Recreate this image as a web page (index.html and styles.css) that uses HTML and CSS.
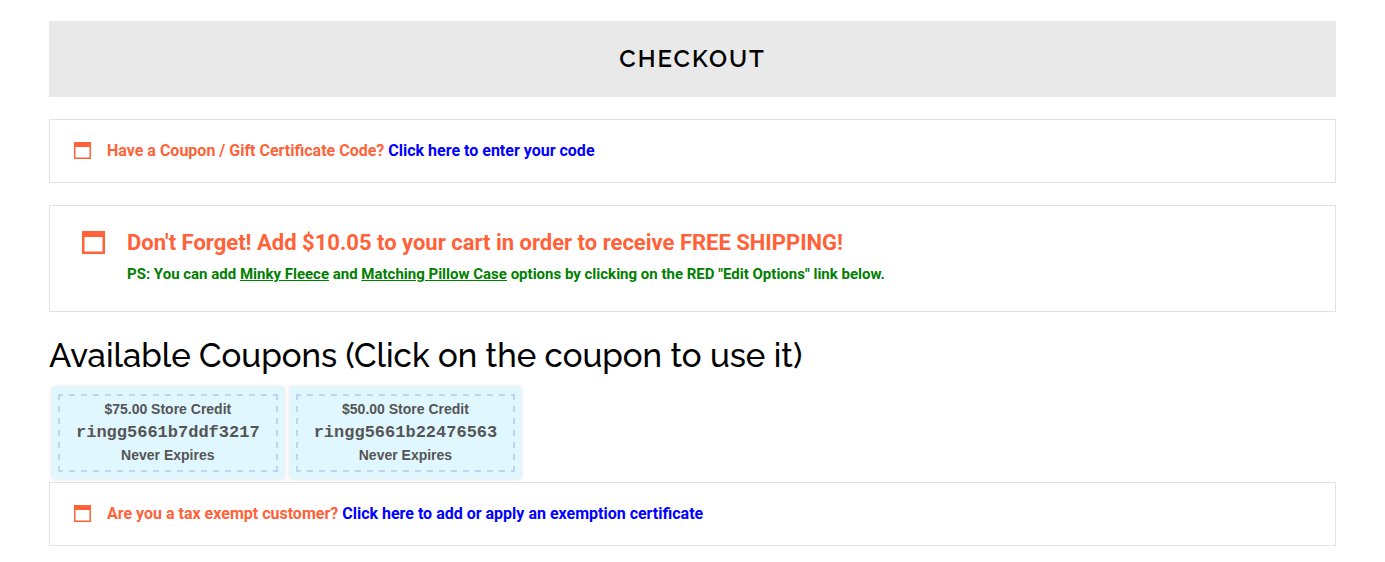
FILE: index.html
```html
<!doctype html>
<html lang="en">
	<head>
		<meta charset="utf-8" />
		<title>Checkout</title>
		<link rel="stylesheet" href="styles.css">
	</head>
	<body>
		<main>
		<header class="page-title">
			<h1>Checkout</h1>
		</header>

		<div class="notice">
			<svg class="icon" viewBox="0 0 17 17" aria-hidden="true"><path fill-rule="evenodd" d="M0 0h17v17H0zM1.5 5v10.5h14V5z" /></svg>
			<p>Have a Coupon / Gift Certificate Code? <a href="#coupon">Click here to enter your code</a></p>
		</div>

		<div class="notice notice-large">
			<svg class="icon" viewBox="0 0 23 23" aria-hidden="true"><path fill-rule="evenodd" d="M0 0h23v23H0zM2.5 6v14.5h18V6z" /></svg>
			<div>
				<p>Don't Forget! Add $10.05 to your cart in order to receive FREE SHIPPING!</p>
				<p class="hint">PS: You can add <u>Minky Fleece</u> and <u>Matching Pillow Case</u> options by clicking on the RED "Edit Options" link below.</p>
			</div>
		</div>

		<h2>Available Coupons (Click on the coupon to use it)</h2>

		<div class="coupons">
			<button type="button" class="coupon">
				<span class="coupon-content">
					<span>$75.00 Store Credit</span>
					<span class="code">ringg5661b7ddf3217</span>
					<span>Never Expires</span>
				</span>
			</button>
			<button type="button" class="coupon">
				<span class="coupon-content">
					<span>$50.00 Store Credit</span>
					<span class="code">ringg5661b22476563</span>
					<span>Never Expires</span>
				</span>
			</button>
		</div>

		<div class="notice">
			<svg class="icon" viewBox="0 0 17 17" aria-hidden="true"><path fill-rule="evenodd" d="M0 0h17v17H0zM1.5 5v10.5h14V5z" /></svg>
			<p>Are you a tax exempt customer? <a href="#exemption">Click here to add or apply an exemption certificate</a></p>
		</div>
		</main>
	</body>
</html>
```
FILE: styles.css
```css
body {
	margin: 0;
	background: #fff;
	font-family: Roboto, sans-serif;
}

main {
	margin: 21px 49px 16px;
}

h1, h2, p {
	margin: 0;
}

h1, h2 {
	font-family: Raleway, Lato, sans-serif;
	font-weight: 500;
	color: #000;
}

.page-title {
	margin-bottom: 22px;
	padding: 22px;
	background: #e9e9e9;
	text-align: center;
}

h1 {
	font-size: 24px;
	line-height: 32px;
	font-weight: 600;
	letter-spacing: 2px;
	text-transform: uppercase;
}

h2 {
	font-size: 33px;
	line-height: 40px;
}

.notice {
	display: flex;
	align-items: center;
	gap: 16px;
	padding: 19px 24px;
	border: 1px solid #e2e2e2;
	font-size: 16px;
	line-height: 24px;
	font-weight: 700;
	color: #ff6239;
}

.notice a {
	color: #00f;
	text-decoration: none;
}

.icon {
	flex: none;
	width: 17px;
	height: 17px;
	margin-bottom: 1px;
	fill: currentColor;
}

.notice-large {
	align-items: flex-start;
	gap: 22px;
	margin: 22px 0 24px;
	padding: 21px 32px;
	font-size: 22px;
	line-height: 32px;
}

.notice-large .icon {
	width: 23px;
	height: 23px;
	margin-top: 4px;
}

.hint {
	padding-bottom: 1px;
	font-size: 15px;
	line-height: 30px;
	color: #008000;
}

.coupons {
	display: flex;
	flex-wrap: wrap;
	gap: 6px;
	padding: 11px 3px 3px;
}

.coupon {
	padding: 7px 6px;
	border: 0;
	border-radius: 2px;
	background: #e0f7ff;
	box-shadow: 0 0 4px rgba(0, 0, 0, 0.15);
	font-family: "Liberation Sans", sans-serif;
	font-size: 14px;
	line-height: 22px;
	font-weight: 700;
	color: #555;
	cursor: pointer;
}

/* dashed outline, 6px on / 6px off */
.coupon-content {
	--dash: transparent 3px, #c0d4ee 3px, #c0d4ee 9px, transparent 9px;
	display: block;
	padding: 4px 18px 6px;
	background:
		linear-gradient(to right, var(--dash)) top / 12px 2px repeat-x,
		linear-gradient(to right, var(--dash)) bottom / 12px 2px repeat-x,
		linear-gradient(to bottom, var(--dash)) left / 2px 12px repeat-y,
		linear-gradient(to bottom, var(--dash)) right / 2px 12px repeat-y;
}

.coupon-content span {
	display: block;
}

.coupon-content .code {
	margin-top: 2px;
	font-family: "Liberation Mono", monospace;
	font-size: 17px;
}
```
